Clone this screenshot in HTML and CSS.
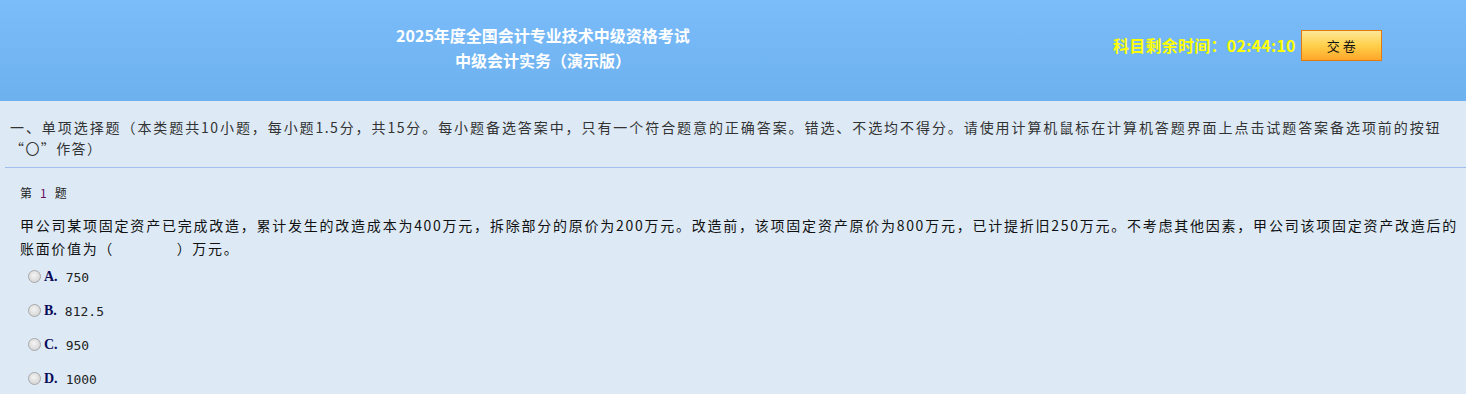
FILE: index.html
```html
<!DOCTYPE html>
<html lang="zh-CN">
<head>
<meta charset="utf-8">
<title>2025年度全国会计专业技术中级资格考试</title>
<link rel="stylesheet" href="styles.css">
</head>
<body>
<header class="top">
  <div class="title">
    <div>2025年度全国会计专业技术中级资格考试</div>
    <div>中级会计实务（演示版）</div>
  </div>
  <div class="timer">
    <span class="timer-text">科目剩余时间：02:44:10</span>
    <button class="submit" type="button">交 卷</button>
  </div>
</header>
<section class="section">一、单项选择题（本类题共10小题，每小题1.5分，共15分。每小题备选答案中，只有一个符合题意的正确答案。错选、不选均不得分。请使用计算机鼠标在计算机答题界面上点击试题答案备选项前的按钮<span class="nw">“〇”作答）</span></section>
<div class="question">
  <div class="qno">第<span class="num">1</span>题</div>
  <div class="qtext">甲公司某项固定资产已完成改造，累计发生的改造成本为400万元，拆除部分的原价为200万元。改造前，该项固定资产原价为800万元，已计提折旧250万元。不考虑其他因素，甲公司该项固定资产改造后的账面价值为（　　　　）万元。</div>
  <div class="options">
    <label class="opt"><span class="radio"></span><b class="key">A.</b><span class="val">750</span></label>
    <label class="opt"><span class="radio"></span><b class="key">B.</b><span class="val">812.5</span></label>
    <label class="opt"><span class="radio"></span><b class="key">C.</b><span class="val">950</span></label>
    <label class="opt"><span class="radio"></span><b class="key">D.</b><span class="val">1000</span></label>
  </div>
</div>
</body>
</html>
```

FILE: styles.css
```css
html, body {
  margin: 0;
  padding: 0;
}
body {
  background: #ddeaf6;
  font-family: "Noto Sans CJK SC", "Noto Sans", sans-serif;
  color: #222;
  overflow: hidden;
}
.top {
  height: 101px;
  display: flex;
  align-items: flex-start;
  background: linear-gradient(to bottom, #7bbcfb 0%, #6db1ee 100%);
}
.title {
  flex: 0 0 1086px;
  text-align: center;
  padding-top: 23px;
  color: #fff;
  font-weight: bold;
  font-size: 16px;
  line-height: 25px;
}
.timer {
  display: flex;
  align-items: center;
  margin-top: 30px;
  margin-left: 27px;
}
.timer-text {
  color: #ffff00;
  font-weight: bold;
  font-size: 16px;
  line-height: 31px;
  letter-spacing: 0.25px;
  font-family: "Noto Sans CJK SC", "Liberation Sans", sans-serif;
}
.submit {
  margin-left: 5px;
  width: 81px;
  height: 31px;
  border: 1px solid #e37a10;
  background: linear-gradient(to bottom, #fde79a 0%, #ffd04a 50%, #ffa62a 100%);
  font-family: "Noto Sans CJK SC", sans-serif;
  font-size: 13px;
  color: #111;
  padding: 0;
}
.section {
  margin: 0 0 0 5px;
  padding: 16px 25px 8px 5px;
  border-bottom: 1px solid #a5bef0;
  font-size: 14px;
  line-height: 21px;
  letter-spacing: 1.4px;
  text-align: justify;
  color: #333;
}
.nw {
  white-space: nowrap;
}
.question {
  padding: 15px 8px 0 20px;
}
.qno {
  font-size: 12px;
  line-height: 20px;
  color: #222;
}
.qno .num {
  color: #6a1060;
  margin: 0 8px;
}
.qtext {
  margin-top: 11px;
  font-size: 14px;
  line-height: 23px;
  letter-spacing: 1.67px;
  text-align: justify;
  color: #111;
}
.options {
  display: flex;
  flex-direction: column;
  padding-left: 8px;
}
.opt {
  height: 34px;
  display: flex;
  align-items: center;
}
.radio {
  width: 11px;
  height: 11px;
  border-radius: 50%;
  border: 1px solid #a8a8a8;
  background: radial-gradient(circle at 45% 40%, #f4f4f4 0%, #dcdcdc 60%, #c8c8c8 100%);
  margin-top: -2px;
}
.key {
  margin-left: 3px;
  font-family: "Liberation Serif", serif;
  font-size: 14px;
  color: #0a0a5a;
}
.val {
  margin-left: 8px;
  font-family: "DejaVu Sans Mono", "Liberation Mono", monospace;
  font-size: 13px;
  color: #222;
}
```
